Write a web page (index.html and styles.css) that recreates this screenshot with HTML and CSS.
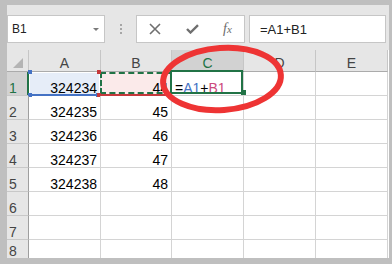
FILE: index.html
```html
<!DOCTYPE html>
<html lang="en">
<head>
  <meta charset="UTF-8" />
  <meta name="viewport" content="width=device-width, initial-scale=1.0" />
  <title>Hoja de cálculo</title>
  <link rel="stylesheet" href="styles.css">
</head>
<body>
  <div class="window">
    <div class="toolbar">
      <div class="namebox">B1<span class="caret"></span></div>
      <div class="grip"><i></i><i></i><i></i></div>
      <div class="buttons">
        <svg width="12" height="12" viewBox="0 0 12 12"><path d="M1 1L11 11M11 1L1 11" stroke="#6f6f6f" stroke-width="1.6" fill="none"/></svg>
        <svg width="13" height="10" viewBox="0 0 13 10"><path d="M1 5L4.5 8.5L12 1.2" stroke="#6f6f6f" stroke-width="2.4" fill="none"/></svg>
        <span class="fx">f<span>x</span></span>
      </div>
      <div class="formula">=A1+B1</div>
    </div>

    <div class="sheet">
      <div class="corner"></div>
      <div class="ch">A</div>
      <div class="ch">B</div>
      <div class="ch sel">C</div>
      <div class="ch">D</div>
      <div class="ch">E</div>

      <div class="rh sel">1</div>
      <div class="num ref-a">324234</div>
      <div class="num ref-b">44</div>
      <div class="active"><span>=</span><span class="r1">A1</span><span>+</span><span class="r2">B1</span></div>
      <div></div>
      <div></div>

      <div class="rh">2</div>
      <div class="num">324235</div>
      <div class="num">45</div>
      <div></div><div></div><div></div>

      <div class="rh">3</div>
      <div class="num">324236</div>
      <div class="num">46</div>
      <div></div><div></div><div></div>

      <div class="rh">4</div>
      <div class="num">324237</div>
      <div class="num">47</div>
      <div></div><div></div><div></div>

      <div class="rh">5</div>
      <div class="num">324238</div>
      <div class="num">48</div>
      <div></div><div></div><div></div>

      <div class="rh">6</div>
      <div></div><div></div><div></div><div></div><div></div>

      <div class="rh">7</div>
      <div></div><div></div><div></div><div></div><div></div>

      <div class="rh">8</div>
      <div></div><div></div><div></div><div></div><div></div>
    </div>

    <!-- marca a mano alzada sobre C1 -->
    <svg class="mark" width="382" height="253" viewBox="0 0 382 253">
      <ellipse cx="215" cy="74" rx="59" ry="31" transform="rotate(-4 215 74)" fill="none" stroke="#ee3434" stroke-width="6"/>
    </svg>
  </div>
</body>
</html>
```

FILE: styles.css
```css
* {
  box-sizing: border-box;
}

body {
  margin: 0;
  padding: 5px 3px 0 7px;
  background-color: #bfbfbf;
  font-family: "Liberation Sans", Arial, sans-serif;
}

.window {
  position: relative;
  width: 382px;
  height: 253px;
  background-color: #e6e6e6;
  overflow: hidden;
}

.toolbar {
  display: flex;
  align-items: center;
  height: 45px;
  padding-top: 10px;
  padding-bottom: 7px;
}

.namebox {
  width: 98px;
  height: 28px;
  background-color: #fff;
  border: 1px solid #c6c6c6;
  display: flex;
  align-items: center;
  justify-content: space-between;
  padding: 0 5px 0 4px;
  font-size: 12px;
  color: #222;
}

.caret {
  border-left: 3.5px solid transparent;
  border-right: 3.5px solid transparent;
  border-top: 3.5px solid #7a7a7a;
}

.grip {
  display: flex;
  flex-direction: column;
  gap: 2px;
  margin: 0 14px 0 15px;
}

.grip i {
  width: 2px;
  height: 2px;
  background-color: #a6a6a6;
}

.buttons {
  width: 109px;
  height: 28px;
  background-color: #fff;
  border: 1px solid #c6c6c6;
  display: flex;
  align-items: center;
  justify-content: space-around;
}

.fx {
  font-family: "Liberation Serif", serif;
  font-style: italic;
  font-size: 14px;
  color: #6b6b6b;
}

.fx span {
  font-size: 11px;
}

.formula {
  width: 137px;
  height: 28px;
  margin-left: 4px;
  background-color: #fff;
  border: 1px solid #c6c6c6;
  display: flex;
  align-items: center;
  padding-left: 10px;
  font-size: 13px;
  color: #222;
}

.sheet {
  display: grid;
  grid-template-columns: 22px 72px 71px 72px 72px 72px;
  grid-template-rows: 22px repeat(7, 24px) 19px;
  background-color: #fff;
}

.sheet > div {
  position: relative;
  display: flex;
  align-items: flex-end;
  padding: 0 3px;
  font-size: 14px;
  line-height: 14px;
  color: #000;
  border-right: 1px solid #d4d4d4;
  border-bottom: 1px solid #d4d4d4;
}

.sheet .ch {
  justify-content: center;
  padding-bottom: 1px;
  background-color: #e6e6e6;
  color: #444;
  border-right-color: #c6c6c6;
  border-bottom-color: #ababab;
}

.sheet .rh {
  padding-left: 2px;
  background-color: #e6e6e6;
  color: #444;
  border-right-color: #9e9e9e;
  border-bottom-color: #c8c8c8;
}

.sheet .corner {
  background-color: #e6e6e6;
  border-right-color: #c6c6c6;
  border-bottom-color: #ababab;
}

.corner::after {
  content: "";
  position: absolute;
  left: 6px;
  top: 8px;
  border-left: 10px solid transparent;
  border-bottom: 10px solid #b4b4b4;
}

.sheet .ch.sel {
  background-color: #d2d2d2;
  color: #217346;
  border-bottom-color: #217346;
}

.sheet .rh.sel {
  background-color: #d2d2d2;
  color: #217346;
  border-right-color: #217346;
  box-shadow: inset -1px 0 0 #217346;
}

.num {
  justify-content: flex-end;
}

/* referencia A1 (azul) */
.sheet .ref-a {
  background-color: #e6edf8;
  border-bottom-color: #4472c4;
  box-shadow: inset 1px 1px 0 #fff, inset -1px 0 0 #fff, inset 0 -1px 0 #4472c4;
}

.ref-a::after {
  content: "";
  position: absolute;
  left: -1px;
  top: -2px;
  width: 4px;
  height: 4px;
  background-color: #4472c4;
  box-shadow: 0 23px 0 #4472c4, 68px 23px 0 #4472c4;
}

/* referencia B1 (roja) con hormigas */
.sheet .ref-b {
  background-color: #fbeaea;
  border-bottom-color: #c5383c;
  box-shadow: inset 0 -1px 0 #c5383c;
}

.ref-b::before {
  content: "";
  position: absolute;
  left: -1px;
  top: 0;
  right: -1px;
  bottom: 1px;
  border: 2px dashed #217346;
}

.ref-b::after {
  content: "";
  position: absolute;
  left: -4px;
  top: -2px;
  width: 4px;
  height: 4px;
  background-color: #c5383c;
  box-shadow: 0 23px 0 #c5383c;
}

/* celda activa C1 */
.active::before {
  content: "";
  position: absolute;
  left: -2px;
  top: -2px;
  right: 0;
  bottom: 1px;
  border: 2px solid #217346;
}

.active::after {
  content: "";
  position: absolute;
  right: -3px;
  bottom: 0;
  width: 5px;
  height: 5px;
  background-color: #217346;
}

.r1 {
  color: #4472c4;
}

.r2 {
  color: #cc4a7d;
}

.mark {
  position: absolute;
  left: 0;
  top: 0;
  pointer-events: none;
}
```
